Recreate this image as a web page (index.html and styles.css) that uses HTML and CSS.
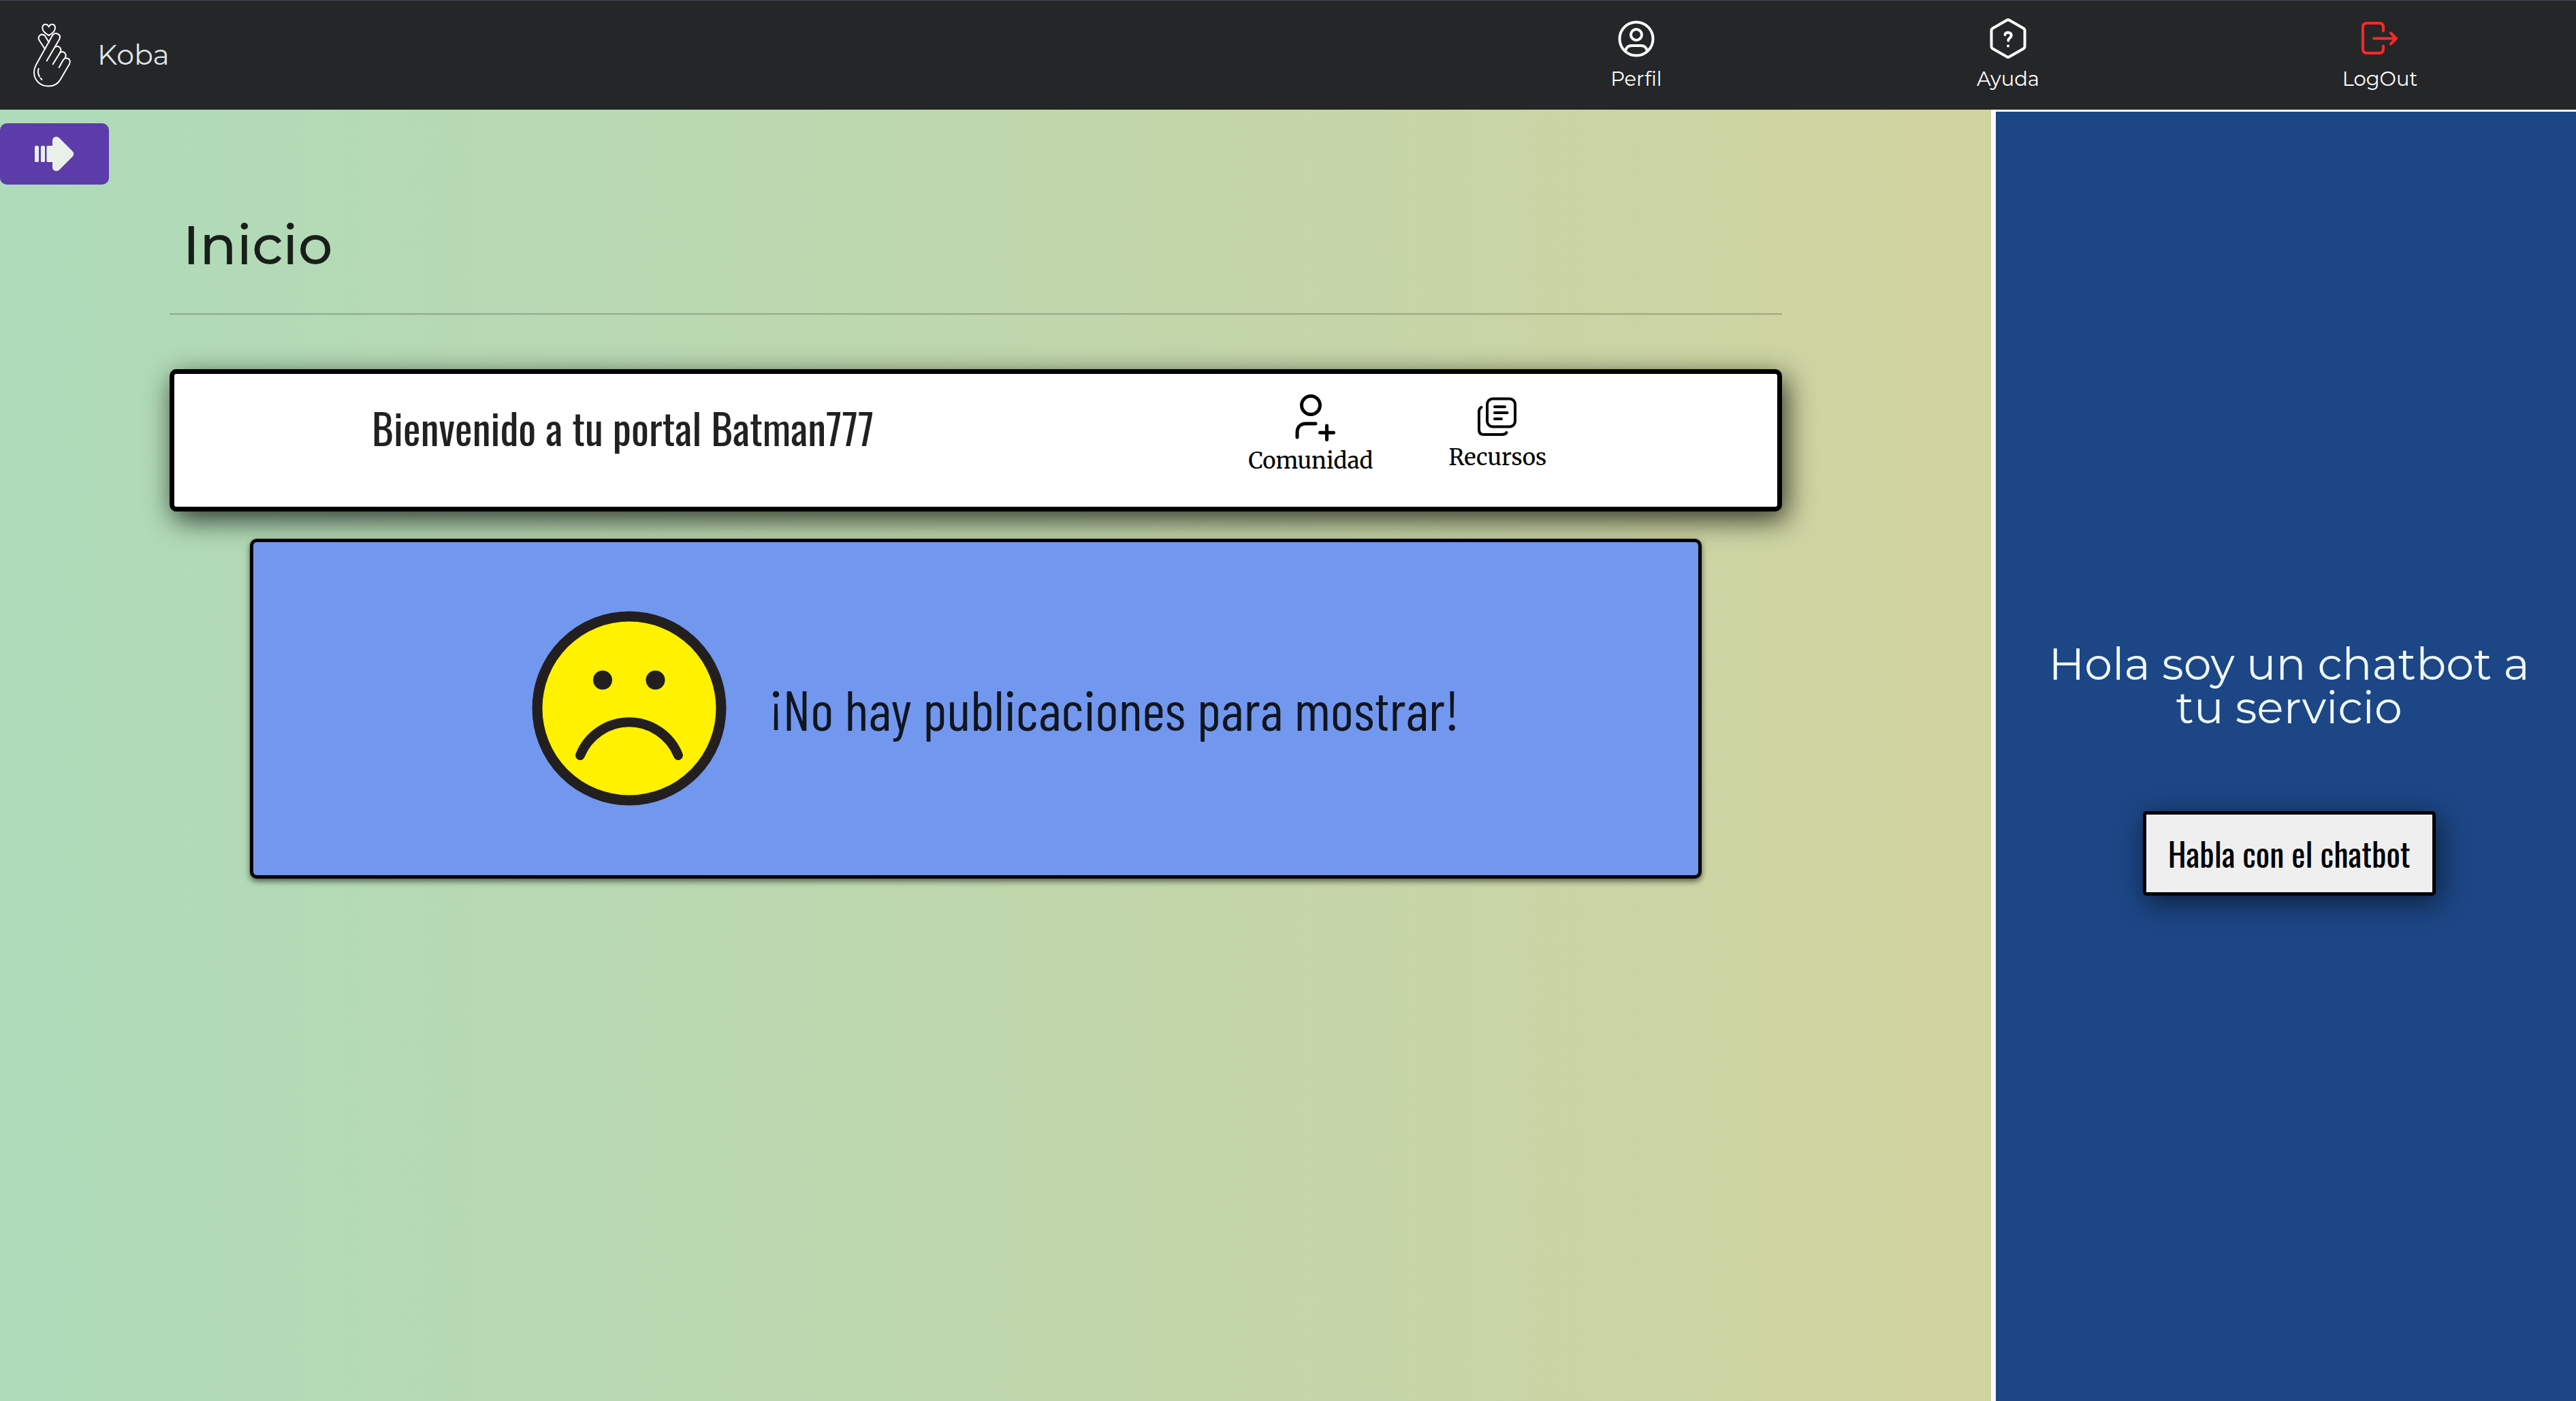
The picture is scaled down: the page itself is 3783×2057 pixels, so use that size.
FILE: index.html
```html
<!DOCTYPE html>
<html lang="es">
<head>
<meta charset="utf-8">
<meta name="viewport" content="width=device-width, initial-scale=1">
<title>Koba</title>
<link rel="stylesheet" href="styles.css">
</head>
<body>
<header class="topbar">
  <a class="brand" href="#">
    <svg class="brand-logo" viewBox="0 0 60 100" aria-hidden="true">
      <path d="M26.7 9.5C24.5 4 17.5 4.500 17.300 11C17.300 16 22 19.500 26.700 22C31.500 19.500 36 16 36 11C35.800 4.500 29 4 26.700 9.500Z"/>
      <path d="M21 42L12.500 29C9.500 23 16 18 21 22.500L27 32.500"/>
      <path d="M23.700 59.300L42.300 27.500C45.500 20.500 36.500 16.500 32.300 21.500L8.300 64.500C-1 82 11 96.500 25.700 96.500C34 96.500 40.500 92.500 43.500 87L57 64C60.500 56 51 52.500 47.500 58.500L41.700 69"/>
      <path d="M35.500 39.500C41 35.500 47 41.500 43 47.500L32.700 64.300"/>
      <path d="M43 47.500C48 43.500 54 49 50.500 55"/>
      <path d="M11.700 70.700C10.300 75 11 79 13 82.500M14.500 84.700L16.500 87"/>
    </svg>
    <span>Koba</span>
  </a>
  <nav class="topnav">
    <a class="topnav-link" href="#">
      <svg class="topnav-icon" viewBox="0 0 64 64" aria-hidden="true">
        <circle cx="32" cy="32" r="24.500"/><circle cx="32" cy="26" r="8"/>
        <path d="M16 50C17 45 20 42 25 42H39C44 42 47 45 48 50"/>
      </svg>
      Perfil
    </a>
    <a class="topnav-link" href="#">
      <svg class="topnav-icon" viewBox="0 0 64 64" aria-hidden="true">
        <path d="M30 4.800Q32 3.500 34 4.800L54.500 16.500Q56.500 17.700 56.500 20V43Q56.500 45.300 54.500 46.500L34 58.200Q32 59.500 30 58.200L9.500 46.500Q7.500 45.300 7.500 43V20Q7.500 17.700 9.500 16.500Z"/>
        <path d="M27.500 26C27.500 21.500 36.800 21.500 36.800 27C36.800 30.500 32.500 30.500 32.300 34.500M32 42.500V42.600"/>
      </svg>
      Ayuda
    </a>
    <a class="topnav-link" href="#">
      <svg class="topnav-icon topnav-icon-exit" viewBox="0 0 64 64" aria-hidden="true">
        <path d="M37 20.500V15Q37 9 31 9H13Q7 9 7 15V47Q7 53 13 53H31Q37 53 37 47V42.500M23 31.500H55M48 23.500L56 31.500L48 39.500"/>
      </svg>
      LogOut
    </a>
  </nav>
</header>

<div class="layout">
  <main class="content">
    <button class="menu-toggle" type="button" aria-label="Abrir menú">
      <svg class="menu-arrow" viewBox="0 0 60 52" aria-hidden="true">
        <rect x="1" y="14" width="6" height="24" rx="2"/>
        <rect x="10" y="14" width="6" height="24" rx="2"/>
        <path d="M20.500 14H27V7C27 1 33 -1 37 2.500L56.500 22Q60 26 56.500 30L37 49.500C33 53 27 51 27 45V38H20.500Q18.500 38 18.500 36V16Q18.500 14 20.500 14Z"/>
      </svg>
    </button>
    <div class="feed">
      <h1 class="page-title">Inicio</h1>
      <section class="welcome">
        <h2 class="welcome-text">Bienvenido a tu portal Batman777</h2>
        <div class="welcome-links">
          <a class="welcome-link" href="#">
            <svg class="icon-community" viewBox="0 0 80 80" aria-hidden="true">
              <circle cx="40" cy="20" r="13.500"/>
              <path d="M20 67V60C20 52 25 47 33 47H47M63.500 50V70.500M53.500 60.300H73.500"/>
            </svg>
            Comunidad
          </a>
          <a class="welcome-link" href="#">
            <svg class="icon-resources" viewBox="0 0 80 75" aria-hidden="true">
              <rect x="25" y="10.500" width="41" height="41" rx="8"/>
              <path d="M16.500 23Q13 25 13 29V56Q13 63 20 63H46Q52 63 53.500 60M36 22.300H51M36 31H54.500M36 40H46"/>
            </svg>
            Recursos
          </a>
        </div>
      </section>
      <section class="empty">
        <svg class="sad-face" viewBox="0 0 286 286" aria-hidden="true">
          <circle class="sad-head" cx="143" cy="143" r="135"/>
          <circle class="sad-eye" cx="104" cy="101.500" r="14"/>
          <circle class="sad-eye" cx="181.500" cy="101.500" r="14"/>
          <path class="sad-mouth" d="M71 212A77.600 77.600 0 0 1 215 212"/>
        </svg>
        <p class="empty-text">¡No hay publicaciones para mostrar!</p>
      </section>
    </div>
  </main>
  <aside class="chat">
    <p class="chat-text">Hola soy un chatbot a tu servicio</p>
    <button class="chat-button" type="button">Habla con el chatbot</button>
  </aside>
</div>
</body>
</html>
```
FILE: styles.css
```css
* { box-sizing: border-box; }

body {
  margin: 0;
  min-height: 100vh;
  display: flex;
  flex-direction: column;
  font-family: Montserrat, Inter, sans-serif;
  color: #212529;
}

h1, h2, p { margin: 0; font-weight: 400; }
a { color: inherit; text-decoration: none; }
svg { display: block; fill: none; stroke: currentColor; stroke-linecap: round; stroke-linejoin: round; }

/* Top bar */
.topbar {
  display: flex;
  justify-content: space-between;
  align-items: center;
  height: 161px;
  padding: 0 15px 3px 45px;
  border-top: 1px solid #444950;
  background: #252628;
  color: #fff;
}
.brand { display: flex; align-items: center; gap: 38px; font-size: 41px; color: #dfe6e6; }
.brand-logo { width: 60px; height: 100px; stroke: #fff; stroke-width: 2; }
.topnav { display: grid; grid-template-columns: repeat(3, 1fr); width: 44%; }
.topnav-link { display: flex; flex-direction: column; align-items: center; gap: 9px; font-size: 29px; line-height: 36px; }
.topnav-icon { width: 64px; height: 64px; stroke-width: 4; }
.topnav-icon-exit { color: #ff2825; }

/* Columns */
.layout { flex: 1; display: flex; }
.content {
  flex: 1;
  padding: 20px 0;
  background: linear-gradient(90deg, #aedbba, #d1d39f);
}
.menu-toggle {
  display: grid;
  place-items: center;
  width: 160px;
  height: 90px;
  padding: 0;
  border: 0;
  border-radius: 10px;
  background: #5c3ca8;
  color: #e9f0e9;
}
.menu-arrow { width: 60px; height: 52px; fill: currentColor; stroke: none; }

.feed { width: 81%; margin-left: 8.5%; padding-top: 41px; }
.page-title {
  padding: 0 20px 52px;
  border-bottom: 2px solid #00000038;
  font-size: 80px;
  font-weight: 500;
  line-height: 96px;
  color: #1a1e1a;
}

/* Welcome card */
.welcome {
  display: flex;
  height: 209px;
  margin-top: 80px;
  padding-top: 26px;
  border: 7px solid #000;
  border-radius: 10px;
  background: #fff;
  box-shadow: 6px 12px 40px #000000c0;
}
.welcome-text {
  width: 56%;
  padding-top: 8px;
  font: 400 61px/90px Oswald, "Roboto Condensed", sans-serif;
  text-align: center;
  color: #212121;
}
.welcome-links { flex: 1; display: flex; align-items: flex-start; gap: 111px; padding-left: 259px; color: #000; }
.welcome-link {
  display: flex;
  flex-direction: column;
  align-items: center;
  font: 400 33px/44px Merriweather, "DejaVu Serif Condensed", serif;
}
.icon-community { width: 80px; height: 80px; stroke-width: 5; }
.icon-resources { width: 80px; height: 75px; stroke-width: 4; }

/* Empty state */
.empty {
  display: flex;
  justify-content: center;
  align-items: center;
  gap: 62px;
  width: 90%;
  height: 499px;
  margin: 40px auto 0;
  padding: 0 0 2px 58px;
  border: 5px solid #000;
  border-radius: 10px;
  background: #7297ee;
  box-shadow: 0 4px 8px #00000090;
}
.sad-face { width: 286px; height: 286px; stroke: #231f20; stroke-width: 15; }
.sad-head { fill: #fff100; }
.sad-eye { fill: #231f20; stroke: none; }
.sad-mouth { stroke-width: 14; }
.empty-text { font: 400 82px/96px "Barlow Condensed", "Roboto Condensed", sans-serif; color: #10151f; }

/* Chat panel */
.chat {
  display: flex;
  flex-direction: column;
  justify-content: center;
  align-items: center;
  gap: 120px;
  width: 22.7%;
  padding: 36px 60px 0 69px;
  border-top: 3px solid #fff;
  border-left: 7px solid #fff;
  background: #1c4685;
}
.chat-text { font-size: 65px; line-height: 64px; text-align: center; color: #f0f8ff; }
.chat-button {
  height: 124px;
  padding: 0 32px;
  border: 5px solid #000;
  border-radius: 5px;
  background: #efefef;
  color: #000;
  font: 400 48px/72px Oswald, "Roboto Condensed", sans-serif;
  box-shadow: 5px 10px 40px #00000090;
}
```
